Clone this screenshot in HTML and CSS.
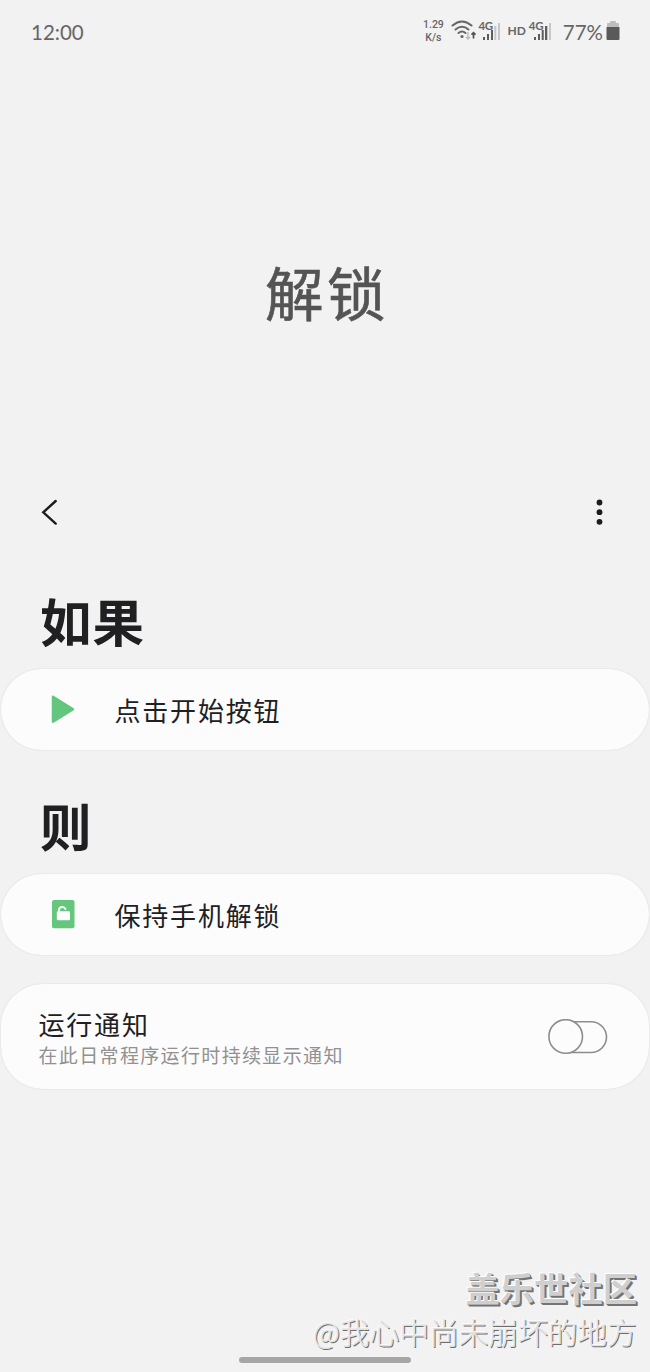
FILE: index.html
```html
<!DOCTYPE html>
<html lang="zh-CN">
<head>
<meta charset="utf-8">
<title>解锁</title>
<link rel="stylesheet" href="styles.css">
</head>
<body>
<div class="screen">
  <header class="status">
    <span class="clock">12:00</span>
    <div class="indicators">
      <div class="speed"><span>1.29</span><span>K/s</span></div>
      <svg class="wifi" width="26" height="22" viewBox="0 0 26 22">
        <g fill="none" stroke="#666" stroke-width="2" stroke-linecap="round">
          <path d="M1.500 5.500Q11 -2.500 20.500 5.500"/>
          <path d="M4.500 9.500Q11 4 17.500 9.500"/>
          <path d="M7.500 13Q11 10 14.500 13"/>
        </g>
        <circle cx="11" cy="16.500" r="1.600" fill="#666"/>
        <path d="M17 12v7m-2-2 2 2 2-2" fill="none" stroke="#bbb" stroke-width="1.400"/>
        <path d="M22.500 18.500v-6m-2 2.200 2-2 2 2" fill="none" stroke="#555" stroke-width="1.700"/>
      </svg>
      <div class="signal">
        <svg width="23" height="22" viewBox="0 0 23 22">
          <path d="M5 17h2v3H5zM9 14h2v6H9zM13 10h2v10h-2z" fill="#5c5c5c"/>
          <path d="M16.300 6h2v14h-2zM20 3h2v17h-2z" fill="#c6c6c6"/>
        </svg>
        <span class="net">4G</span>
      </div>
      <span class="hd">HD</span>
      <div class="signal">
        <svg width="23" height="22" viewBox="0 0 23 22">
          <path d="M5 17h2v3H5zM9 14h2v6H9zM12.700 10h2v10h-2zM16 6h2.300v14H16z" fill="#5c5c5c"/>
          <path d="M20 3h2v17h-2z" fill="#c6c6c6"/>
        </svg>
        <span class="net">4G</span>
      </div>
      <span class="percent">77%</span>
      <svg class="battery" width="14" height="20" viewBox="0 0 14 20">
        <path d="M4 1q0-1 1-1h4q1 0 1 1v1h2q1 0 1 1v3H1V3q0-1 1-1h2z" fill="#bdbdbd"/>
        <path d="M.5 6h13v12q0 1-1 1h-11q-1 0-1-1z" fill="#5a5a5a"/>
      </svg>
    </div>
  </header>

  <h1 class="title">解锁</h1>

  <nav class="toolbar">
    <svg width="18" height="28" viewBox="0 0 18 28"><path d="M15.700 3 3.300 14.300 15.700 25.600" fill="none" stroke="#1c1c1c" stroke-width="2.400" stroke-linecap="round"/></svg>
    <svg width="8" height="28" viewBox="0 0 8 28" fill="#1c1c1c"><circle cx="4.500" cy="4.500" r="2.900"/><circle cx="4.500" cy="14.200" r="2.900"/><circle cx="4.500" cy="23.800" r="2.900"/></svg>
  </nav>

  <h2 class="heading">如果</h2>
  <section class="card row">
    <svg class="icon" width="24" height="30" viewBox="0 0 24 30"><path d="M2 1.700 22 14.200 2 26.700z" fill="#62c67e" stroke="#62c67e" stroke-width="2.500" stroke-linejoin="round"/></svg>
    <span class="label">点击开始按钮</span>
  </section>

  <h2 class="heading second">则</h2>
  <section class="card row">
    <svg class="icon" width="24" height="30" viewBox="0 0 24 30">
      <rect x="1" y="0" width="22.500" height="28.300" rx="2" fill="#65c67d"/>
      <rect x="5.800" y="11.300" width="13.200" height="9" rx="1.200" fill="#fff"/>
      <path d="M8 12v-2Q8 7 11.200 7q2.300 0 3.300 2" fill="none" stroke="#fff" stroke-width="1.900" stroke-linecap="round"/>
    </svg>
    <span class="label">保持手机解锁</span>
  </section>

  <section class="card notice">
    <div class="notice-text">
      <span class="label">运行通知</span>
      <span class="hint">在此日常程序运行时持续显示通知</span>
    </div>
    <svg width="60" height="36" viewBox="0 0 60 36" fill="#fcfcfc" stroke="#8d8d8d" stroke-width="1.600">
      <rect x="4" y="2.700" width="54.500" height="30.800" rx="15.400"/>
      <circle cx="17.700" cy="17.500" r="16.800"/>
    </svg>
  </section>

  <footer class="watermark">
    <span class="community">盖乐世社区</span>
    <span class="author">@我心中尚未崩坏的地方</span>
  </footer>
  <div class="home-bar"></div>
</div>
</body>
</html>
```
FILE: styles.css
```css
* { box-sizing: border-box; }

body {
  margin: 0;
  background: #f2f2f2;
  color: #202022;
  font-family: "Noto Sans CJK SC", sans-serif;
}

.screen {
  display: flex;
  flex-direction: column;
  height: 1372px;
  overflow: hidden;
}

.status {
  display: flex;
  justify-content: space-between;
  align-items: center;
  height: 62px;
  padding: 0 30px 0 31px;
  color: #666;
  font-family: Lato, sans-serif;
}

.clock {
  font-size: 20.5px;
  padding-top: 1px;
}

.indicators {
  display: flex;
  align-items: center;
}

.speed {
  display: flex;
  flex-direction: column;
  align-items: center;
  width: 20px;
  margin-right: 8px;
  font: 500 10.5px/13px Roboto, sans-serif;
}

.wifi { margin-right: 1px; }

.signal {
  position: relative;
  width: 23px;
  height: 22px;
}

.net {
  position: absolute;
  top: -1px;
  left: 0;
  font: 700 11.5px/13px Lato, sans-serif;
  letter-spacing: -0.3px;
}

.hd {
  margin: 0 3px 2px 6px;
  font-size: 12px;
  font-weight: 700;
}

.percent {
  margin: 0 3px 0 11px;
  padding-top: 1px;
  font-size: 20.5px;
}

.title {
  margin: 187px 0 0;
  height: 84px;
  padding-left: 4px;
  text-align: center;
  color: #545454;
  font-size: 58.5px;
  font-weight: 400;
  line-height: 84px;
  letter-spacing: 3.5px;
  -webkit-text-stroke: 0.6px #545454;
}

.toolbar {
  display: flex;
  justify-content: space-between;
  align-items: center;
  height: 60px;
  margin-top: 149px;
  padding: 0 47px 0 40px;
}

.heading {
  height: 70px;
  margin: 43px 0 14px;
  padding-left: 40px;
  font-size: 51.5px;
  font-weight: 700;
  line-height: 70px;
  letter-spacing: 1px;
}

.second { margin-top: 40px; }

.card {
  display: flex;
  align-items: center;
  flex: none;
  margin: 0 1px;
  border-radius: 42px;
  background: #fcfcfc;
  box-shadow: 0 0 2px rgba(0, 0, 0, 0.12);
}

.row {
  height: 81px;
  padding-left: 50px;
}

.icon { margin-right: 39.5px; }

.label {
  font-size: 26px;
  line-height: 34px;
  letter-spacing: 1.8px;
}

.notice {
  justify-content: space-between;
  height: 105px;
  margin-top: 29px;
  padding: 0 41px 0 37.5px;
}

.notice-text {
  display: flex;
  flex-direction: column;
  padding-top: 2px;
}

.hint {
  color: #919191;
  font-size: 19px;
  line-height: 28px;
  letter-spacing: 1.35px;
}

.watermark {
  display: flex;
  flex-direction: column;
  align-items: flex-end;
  margin-top: auto;
  padding-right: 13px;
}

.community {
  color: #cfcfcf;
  font-size: 34.3px;
  font-weight: 700;
  line-height: 46px;
  text-shadow: -1px -1px 0 #fff, 1px 1px 0 #747474, 2px 2px 0 #747474;
}

.author {
  color: #e0e0e0;
  font-size: 29.7px;
  font-weight: 300;
  line-height: 44px;
  text-shadow: -1px -1px 0 #fafafa, 1px 1px 0 #6e6e6e;
}

.home-bar {
  width: 172px;
  height: 6px;
  margin: 3px auto 9px;
  border-radius: 3px;
  background: #a6a6a6;
}
```
